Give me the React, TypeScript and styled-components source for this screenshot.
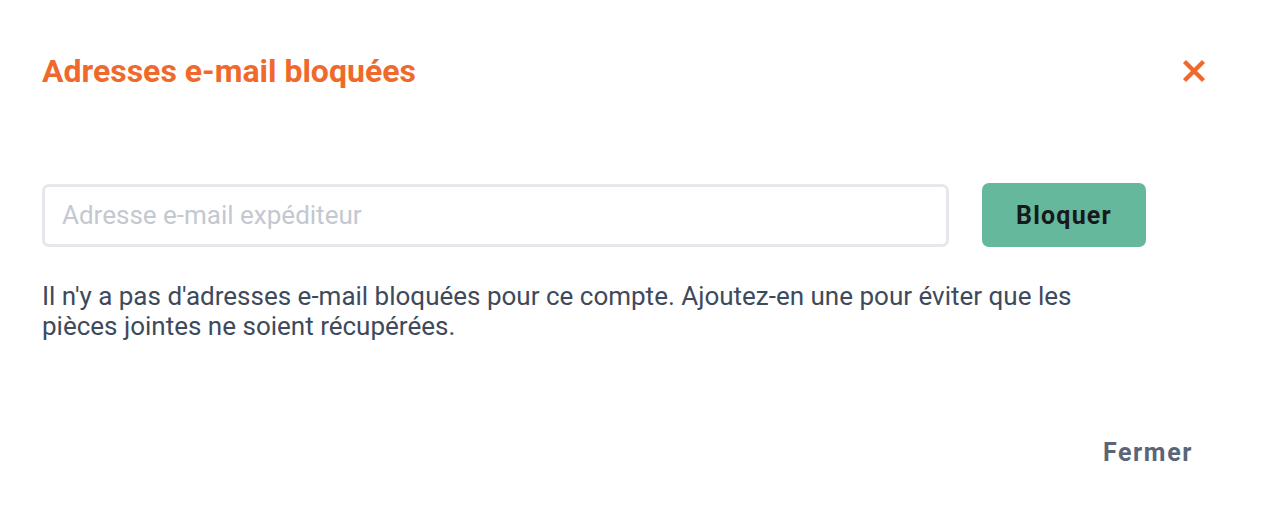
import React from "react";
import styled, { createGlobalStyle } from "styled-components";

const Global = createGlobalStyle`
  html, body { margin: 0; padding: 0; background: #ffffff; }
  body { font-family: Roboto, "Liberation Sans", sans-serif; }
  * { box-sizing: border-box; }
`;

const Modal = styled.div`
  width: 1266px;
  height: 524px;
  padding: 0 42px;
  display: flex;
  flex-direction: column;
`;

const Header = styled.div`
  display: flex;
  align-items: center;
  justify-content: space-between;
  height: 32px;
  margin-top: 55px;
  margin-right: 16px;
`;

const Title = styled.h2`
  margin: 0;
  font-size: 32px;
  font-weight: 700;
  color: #f0692c;
  line-height: 32px;
`;

const CloseButton = styled.button`
  border: none;
  background: none;
  padding: 0;
  width: 28px;
  height: 28px;
  display: flex;
  align-items: center;
  justify-content: center;
  cursor: pointer;
`;

const Row = styled.div`
  display: flex;
  align-items: center;
  gap: 33px;
  margin-top: 96px;
  padding-right: 78px;
`;

const Input = styled.input`
  flex: 1;
  height: 63px;
  border: 3px solid #e4e7eb;
  border-radius: 7px;
  padding: 0 17px;
  font-family: Roboto, "Liberation Sans", sans-serif;
  font-size: 26px;
  color: #333;
  outline: none;
  &::placeholder { color: #c3c8d1; }
`;

const BlockButton = styled.button`
  width: 164px;
  height: 64px;
  border: none;
  border-radius: 7px;
  background: #66b89d;
  color: #17191c;
  font-family: Roboto, "Liberation Sans", sans-serif;
  font-weight: 700;
  font-size: 25px;
  letter-spacing: 1.2px;
`;

const Message = styled.p`
  margin: 34px 0 0 0;
  max-width: 1080px;
  font-size: 26px;
  line-height: 30px;
  color: #3e4a5c;
`;

const Footer = styled.div`
  margin-top: auto;
  margin-bottom: 58px;
  display: flex;
  justify-content: flex-end;
  padding-right: 31px;
`;

const CloseText = styled.button`
  border: none;
  background: none;
  padding: 0;
  font-family: Roboto, "Liberation Sans", sans-serif;
  font-weight: 700;
  font-size: 25px;
  line-height: 26px;
  letter-spacing: 1.6px;
  color: #5a6577;
`;

export default function App() {
  return (
    <>
      <Global />
      <Modal>
        <Header>
          <Title>Adresses e-mail bloquées</Title>
          <CloseButton aria-label="Fermer">
            <svg width="24" height="24" viewBox="0 0 24 24">
              <path d="M2.5 2.5 L21.5 21.5 M21.5 2.5 L2.5 21.5" stroke="#f0692c" strokeWidth="4.4" strokeLinecap="butt" />
            </svg>
          </CloseButton>
        </Header>
        <Row>
          <Input placeholder="Adresse e-mail expéditeur" />
          <BlockButton>Bloquer</BlockButton>
        </Row>
        <Message>
          Il n'y a pas d'adresses e-mail bloquées pour ce compte. Ajoutez-en une pour éviter que les pièces jointes ne soient récupérées.
        </Message>
        <Footer>
          <CloseText>Fermer</CloseText>
        </Footer>
      </Modal>
    </>
  );
}
